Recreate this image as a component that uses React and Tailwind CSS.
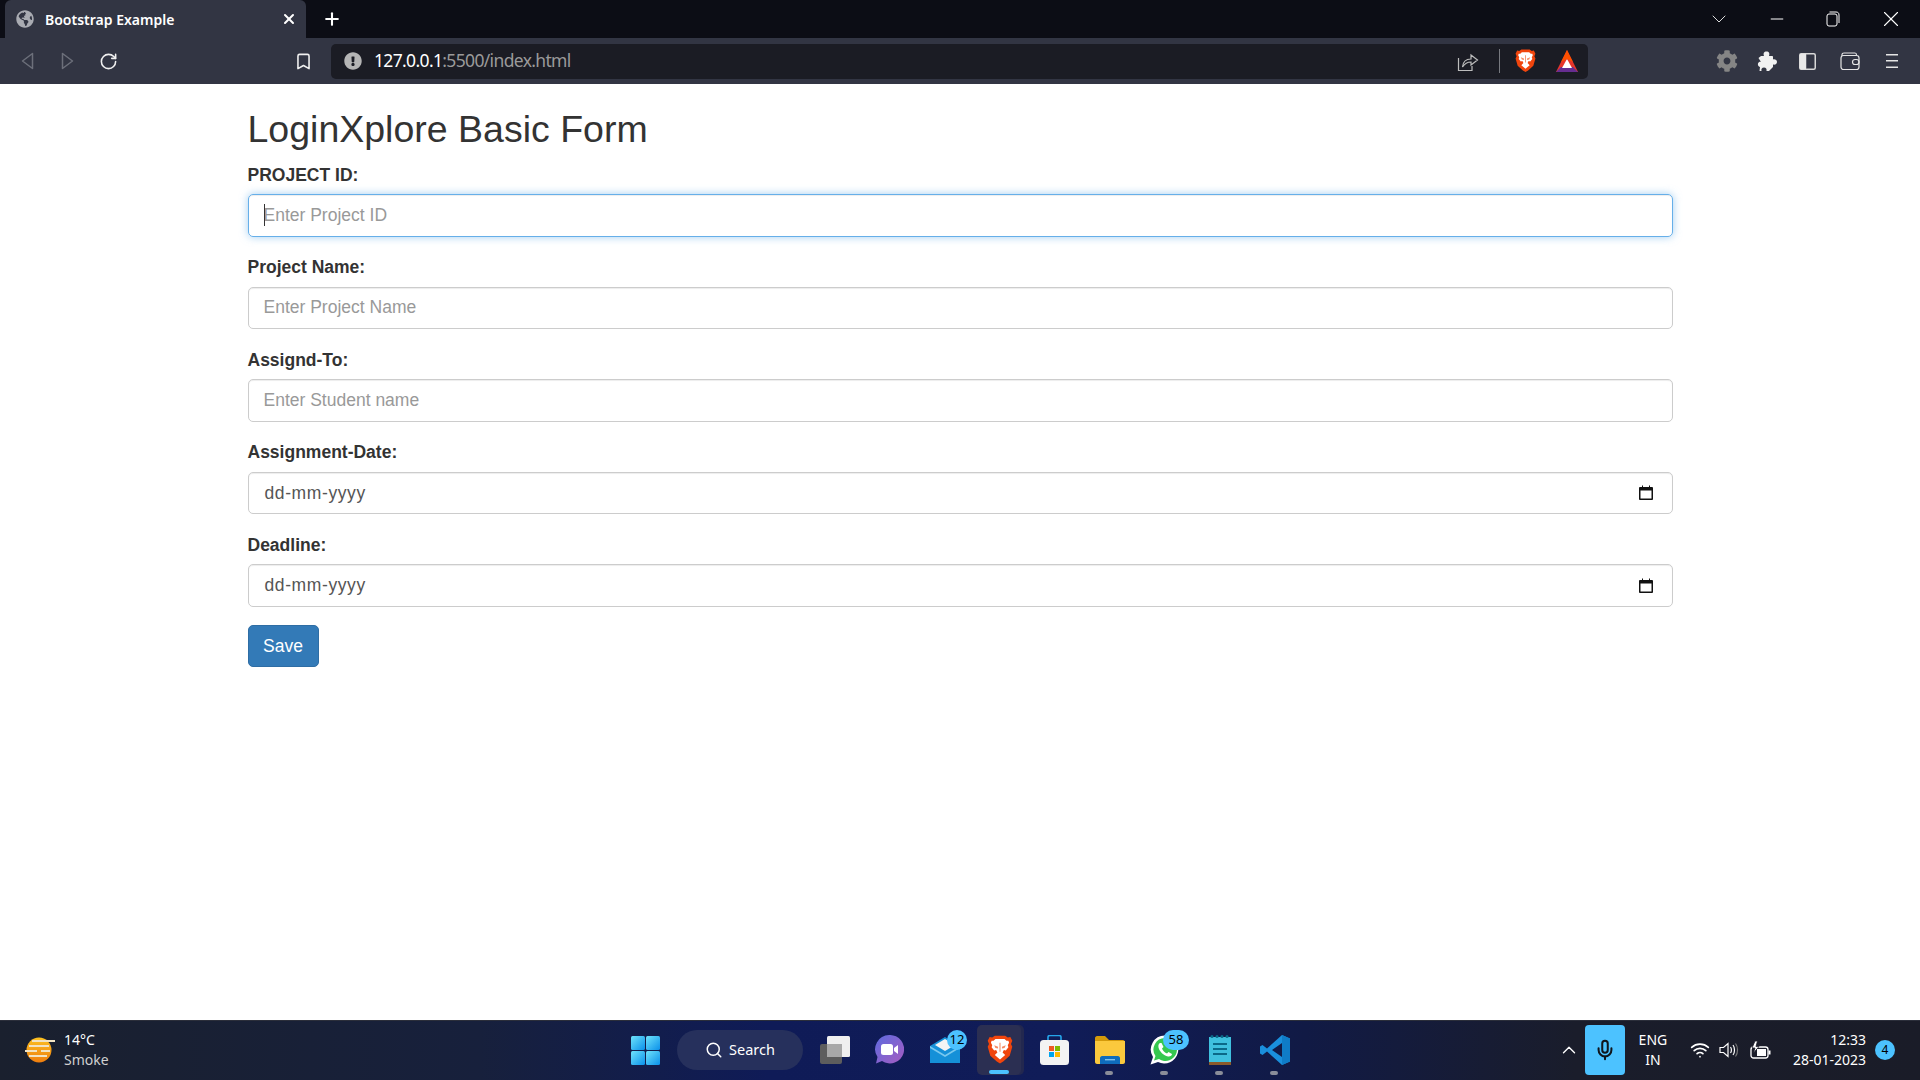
import React from 'react';
import { Plus, X, ChevronDown, ChevronUp, Minus, RotateCw, Bookmark, Search, Mic, Wifi } from 'lucide-react';
import { FaGlobeAmericas, FaExclamationCircle, FaCog } from 'react-icons/fa';

const UI_FONT = "font-['Noto_Sans',sans-serif]";

function BraveLogo({ size = 26 }) {
    return (
        <svg width={size} height={size * 1.12} viewBox="0 0 40 45">
            <path d="M12 1 H28 L32 4 L36 3 L39 9 L37 14 L39 18 L35 32 L25 41 L20 44 L15 41 L5 32 L1 18 L3 14 L1 9 L4 3 L8 4 Z" fill="#f0450d" />
            <path d="M13 6 H27 L30 9 L33 9 L34 12 L32 16 L33 19 L29 24 L26 23 L24 27 L28 31 L20 38 L12 31 L16 27 L14 23 L11 24 L7 19 L8 16 L6 12 L7 9 L10 9 Z" fill="#fff" />
            <path d="M11 16 L17 18 L17 21 L13 20 Z M29 16 L23 18 L23 21 L27 20 Z M19.2 12 H20.8 V26 H19.2 Z" fill="#f58a62" />
        </svg>
    );
}

function BatLogo() {
    return (
        <svg width="24" height="24" viewBox="0 0 24 24">
            <path d="M12 1 L23 23 H1 Z" fill="#e5352b" />
            <path d="M1 23 L6 18 H18 L23 23 Z" fill="#662d91" />
            <path d="M12 10 L17 19 H7 Z" fill="#fff" />
            <path d="M12 1 L18 13 L12 10 L6 13 Z" fill="#ff5000" />
        </svg>
    );
}

function ShareIcon() {
    return (
        <svg width="22" height="22" viewBox="0 0 22 22" fill="none" stroke="#bdbdbd" strokeWidth="1.2">
            <path d="M1.5 8 V20.5 H15 V16" />
            <path d="M5.5 17 C6 11 10 9 14 9 V5 L20.5 10 L14 15 V12 C10 12 8 13 5.5 17 Z" />
        </svg>
    );
}

function PuzzleIcon() {
    return (
        <svg width="20" height="20" viewBox="0 0 20 20" fill="#f2f2f2">
            <path d="M7 5 C6 2.5 7 0.5 9.5 0.5 C12 0.5 13 2.5 12 5 H15 C15.6 5 16 5.4 16 6 V8.5 C18 8 20 9 20 11 C20 13 18 14 16 13.5 V16 L14 18 L12 20 H9.5 C10 18 9 16.5 7 16.5 C5 16.5 4 18 4.5 20 H2.5 L3 16 C1.5 15.5 0.5 14 1 12.5 C1.5 11 3 10.5 4 11 L1.5 7 L4 5 Z" />
        </svg>
    );
}

function SidebarIcon() {
    return (
        <svg width="17" height="17" viewBox="0 0 17 17">
            <rect x="0.75" y="0.75" width="15.5" height="15.5" rx="1.5" fill="none" stroke="#d8d8d8" strokeWidth="1.5" />
            <rect x="0.75" y="0.75" width="6.5" height="15.5" rx="1" fill="#e8e8e8" />
        </svg>
    );
}

function WalletIcon() {
    return (
        <svg width="20" height="20" viewBox="0 0 20 20" fill="none" stroke="#e5e5e5" strokeWidth="1.2">
            <path d="M2 5 V3.5 C2 2.5 3 2 4 2 H15 C16 2 16.5 2.5 16.5 4" />
            <rect x="1" y="4.5" width="18" height="14" rx="2.5" />
            <rect x="12.5" y="8.5" width="6.5" height="5" rx="2.5" />
        </svg>
    );
}

function MenuIcon() {
    return (
        <svg width="14" height="18" viewBox="0 0 14 18" fill="#e5e5e5">
            <rect x="1" y="2" width="12" height="1.5" />
            <rect x="1" y="8" width="12" height="1.5" />
            <rect x="1" y="14.5" width="12" height="1.5" />
        </svg>
    );
}

function RestoreIcon() {
    return (
        <svg width="14" height="16" viewBox="0 0 14 16" fill="none" stroke="#fff" strokeWidth="1">
            <rect x="1" y="3" width="10" height="12" rx="2" />
            <path d="M3.5 1 H10 C12 1 13 2 13 4 V12" />
        </svg>
    );
}

function CalendarIcon() {
    return (
        <svg width="14" height="15" viewBox="0 0 14 15">
            <path d="M1 2 H3 V0.5 H4 V2 H10 V0.5 H11 V2 H13 C13.5 2 14 2.5 14 3 V14 C14 14.5 13.5 15 13 15 H1 C0.5 15 0 14.5 0 14 V3 C0 2.5 0.5 2 1 2 Z" fill="#111" />
            <rect x="1.5" y="5.5" width="11" height="8" fill="#fff" />
        </svg>
    );
}

function WeatherIcon() {
    return (
        <svg width="32" height="28" viewBox="0 0 32 28">
            <defs>
                <linearGradient id="sun" x1="0" y1="0" x2="0" y2="1">
                    <stop offset="0" stopColor="#fdc221" />
                    <stop offset="1" stopColor="#ee7d0e" />
                </linearGradient>
            </defs>
            <circle cx="15" cy="14" r="12.5" fill="url(#sun)" />
            <g fill="#f2e3c3">
                <rect x="8" y="4" width="23" height="2" />
                <rect x="5" y="9" width="20" height="2" />
                <rect x="1" y="14" width="12" height="2" />
                <rect x="17" y="14" width="9" height="2" />
                <rect x="5" y="19" width="18" height="2" />
            </g>
        </svg>
    );
}

function WindowsLogo() {
    return (
        <svg width="29" height="29" viewBox="0 0 29 29">
            <defs>
                <linearGradient id="win" x1="0" y1="0" x2="1" y2="1">
                    <stop offset="0" stopColor="#6fe3fb" />
                    <stop offset="1" stopColor="#0a90ea" />
                </linearGradient>
            </defs>
            <rect x="0" y="0" width="14" height="14" rx="1.5" fill="url(#win)" />
            <rect x="15" y="0" width="14" height="14" rx="1.5" fill="url(#win)" />
            <rect x="0" y="15" width="14" height="14" rx="1.5" fill="url(#win)" />
            <rect x="15" y="15" width="14" height="14" rx="1.5" fill="url(#win)" />
        </svg>
    );
}

function TaskViewIcon() {
    return (
        <svg width="30" height="28" viewBox="0 0 30 28">
            <rect x="0" y="8" width="22" height="20" rx="2" fill="#5d5d5d" />
            <rect x="7" y="0" width="23" height="21" rx="1.5" fill="#efefef" />
            <rect x="7" y="8" width="15" height="13" fill="#a8a8a8" />
        </svg>
    );
}

function TeamsIcon() {
    return (
        <svg width="29" height="30" viewBox="0 0 29 30">
            <defs>
                <linearGradient id="teams" x1="0" y1="0" x2="1" y2="1">
                    <stop offset="0" stopColor="#5d6be0" />
                    <stop offset="1" stopColor="#a65cc0" />
                </linearGradient>
            </defs>
            <path d="M14.5 0 A14.2 14.2 0 1 1 7 26 L1 28.5 L2.5 22 A14.2 14.2 0 0 1 14.5 0 Z" fill="url(#teams)" />
            <rect x="6" y="9" width="12" height="11" rx="2.5" fill="#fff" />
            <path d="M19 13 L23 10 V19 L19 16 Z" fill="#fff" />
        </svg>
    );
}

function MailIcon() {
    return (
        <svg width="30" height="26" viewBox="0 0 30 26">
            <path d="M15 0 L30 9 V26 H0 V9 Z" fill="#1590d8" />
            <path d="M5 8 L15 2 L25 8 L15 14 Z" fill="#f4f4f4" />
            <path d="M0 9 L15 18 L30 9 V11 L15 20 L0 11 Z" fill="#79c8ef" />
        </svg>
    );
}

function StoreIcon() {
    return (
        <svg width="29" height="30" viewBox="0 0 29 30">
            <path d="M8 6 V2 C8 1 9 0.5 10 0.5 H19 C20 0.5 21 1 21 2 V6" fill="none" stroke="#25a5ea" strokeWidth="1.6" />
            <rect x="0" y="5" width="29" height="25" rx="3.5" fill="#f3f3f3" />
            <rect x="9" y="11" width="5" height="5" fill="#ef5a24" />
            <rect x="15" y="11" width="5" height="5" fill="#7fba00" />
            <rect x="9" y="17" width="5" height="5" fill="#00a4ef" />
            <rect x="15" y="17" width="5" height="5" fill="#ffb900" />
        </svg>
    );
}

function FolderIcon() {
    return (
        <svg width="30" height="28" viewBox="0 0 30 28">
            <path d="M0 2 C0 1 1 0 2 0 H10 L14 4 H28 C29 4 30 5 30 6 V12 H0 Z" fill="#d49a0a" />
            <path d="M0 5 H30 V26 C30 27 29 28 28 28 H2 C1 28 0 27 0 26 Z" fill="#fbc93d" />
            <path d="M5 28 V22 C5 21 6 20 7 20 H23 C24 20 25 21 25 22 V28 Z" fill="#0f6cbd" />
            <rect x="10" y="23" width="10" height="1.4" fill="#7fc1ee" />
        </svg>
    );
}

function WhatsAppIcon() {
    return (
        <svg width="30" height="30" viewBox="0 0 30 30">
            <path d="M15 0.5 A14 14 0 1 1 8 27 L0.5 29.5 L3 22 A14 14 0 0 1 15 0.5 Z" fill="#fff" />
            <path d="M15 3 A11.5 11.5 0 1 1 9 24 L4 25.5 L5.5 21 A11.5 11.5 0 0 1 15 3 Z" fill="#35c84f" />
            <path d="M10 8 C9 8.5 8 10 8.5 12.5 C9.5 16.5 13.5 20.5 18 21.5 C20 22 22 20.5 22 19 L18.5 17 L17 18.5 C15 18 12.5 15.5 12 13.5 L13.5 12 L11.5 8 Z" fill="#fff" />
        </svg>
    );
}

function NotepadIcon() {
    return (
        <svg width="22" height="30" viewBox="0 0 22 30">
            <rect x="0" y="2" width="22" height="26" fill="#3fc1de" />
            <rect x="0" y="27" width="22" height="3" fill="#8b5a2b" />
            <g fill="#0b6a88">
                <circle cx="3" cy="1.5" r="1.5" />
                <circle cx="8" cy="1.5" r="1.5" />
                <circle cx="13" cy="1.5" r="1.5" />
                <circle cx="18" cy="1.5" r="1.5" />
                <rect x="4" y="8" width="14" height="2" />
                <rect x="4" y="13" width="14" height="2" />
                <rect x="4" y="18" width="14" height="2" />
            </g>
        </svg>
    );
}

function VsCodeIcon() {
    return (
        <svg width="30" height="30" viewBox="0 0 30 30">
            <path d="M22 0 L30 3.5 V26.5 L22 30 L7 16.5 L2.5 20 L0 18.5 V11.5 L2.5 10 L7 13.5 Z M22 8 L12 15 L22 22 Z" fill="#1a8fdc" fillRule="evenodd" />
            <path d="M22 0 L30 3.5 V26.5 L22 30 Z M22 8 V22 L22 22 Z" fill="#0f7cc7" />
        </svg>
    );
}

function VolumeIcon() {
    return (
        <svg width="20" height="16" viewBox="0 0 20 16" fill="none" stroke="#fff" strokeWidth="1.2">
            <path d="M1 5.5 H4.5 L9 1.5 V14.5 L4.5 10.5 H1 Z" />
            <path d="M11.5 5 C12.7 6.5 12.7 9.5 11.5 11" />
            <path d="M14 3 C16 5.5 16 10.5 14 13" />
            <path d="M16.5 1.5 C19.2 5 19.2 11 16.5 14.5" stroke="#777" />
        </svg>
    );
}

function BatteryIcon() {
    return (
        <svg width="21" height="18" viewBox="0 0 21 18">
            <rect x="1" y="6" width="17" height="11" rx="2.5" fill="none" stroke="#fff" strokeWidth="1.3" />
            <rect x="7" y="8" width="9" height="7" fill="#fff" />
            <rect x="18.5" y="9.5" width="2" height="4" fill="#fff" />
            <path d="M5 0 L2 7 H5 L3.5 12 L9 5.5 H6 L7.5 0 Z" fill="#fff" stroke="#1a1c28" strokeWidth="0.8" />
        </svg>
    );
}

function TaskbarSlot({ children, badge, badgeClass = '', active, running }) {
    return (
        <div className="relative flex h-[60px] w-[55px] shrink-0 items-center justify-center">
            {active && (
                <>
                    <div className="absolute left-[8px] top-[5px] h-[50px] w-[44px] rounded-[5px] bg-[#23284f]" />
                    <div className="absolute left-[5px] top-[5px] h-[50px] w-[44px] rounded-[5px] bg-[#2b2f52]" />
                </>
            )}
            <div className="relative flex items-center justify-center">{children}</div>
            {badge && (
                <div className={`absolute top-[10px] flex h-[20px] items-center justify-center rounded-full bg-[#4cc2ff] text-[13px] text-black ${badgeClass}`}>
                    {badge}
                </div>
            )}
            {active && <div className="absolute bottom-[6px] left-[17px] h-[4px] w-[20px] rounded-full bg-[#4cc2ff]" />}
            {running && <div className="absolute bottom-[5px] left-[23px] h-[4px] w-[8px] rounded-full bg-[#8a8d99]" />}
        </div>
    );
}

function Field({ label, placeholder, focused }) {
    return (
        <div className="mb-[18.75px]">
            <label className="mb-[6.25px] block text-[17.5px] font-bold leading-[25px]">{label}</label>
            <div className="relative">
                <input
                    type="text"
                    placeholder={placeholder}
                    className={`block h-[42.5px] w-full rounded-[5px] border px-[15px] text-[17.5px] outline-none placeholder:text-[#999] ${
                        focused
                            ? 'border-[#66afe9] shadow-[inset_0_1px_1px_rgba(0,0,0,0.075),0_0_8px_rgba(102,175,233,0.6)]'
                            : 'border-[#ccc] shadow-[inset_0_1px_1px_rgba(0,0,0,0.075)]'
                    }`}
                />
                {focused && <div className="absolute left-[16px] top-[10px] h-[22px] w-px bg-[#333]" />}
            </div>
        </div>
    );
}

function DateField({ label }) {
    return (
        <div className="mb-[18.75px]">
            <label className="mb-[6.25px] block text-[17.5px] font-bold leading-[25px]">{label}</label>
            <div className="flex h-[42.5px] items-center justify-between rounded-[5px] border border-[#ccc] pl-[16px] pr-[19px] text-[17.5px] tracking-[0.6px] text-[#555] shadow-[inset_0_1px_1px_rgba(0,0,0,0.075)]">
                <span>dd-mm-yyyy</span>
                <CalendarIcon />
            </div>
        </div>
    );
}

export default function App() {
    return (
        <div className="flex h-[1080px] w-[1920px] flex-col overflow-hidden bg-white">
            {/* tab strip */}
            <div className={`flex h-[38px] shrink-0 items-stretch bg-[#0c0d15] text-white ${UI_FONT}`}>
                <div className="ml-[5px] flex w-[301px] items-center rounded-t-[6px] bg-[#323543] pl-[11px] pr-[7px]">
                    <FaGlobeAmericas size={18} color="#a9abb2" />
                    <span className="ml-[11px] flex-1 text-[14px] font-semibold">Bootstrap Example</span>
                    <X size={16} strokeWidth={3} className="-translate-x-[2px]" />
                </div>
                <div className="ml-[16px] flex items-center">
                    <Plus size={20} strokeWidth={2.5} />
                </div>
                <div className="flex flex-1 items-center justify-end pr-[15px]">
                    <div className="flex w-[28px] justify-center"><ChevronDown size={24} strokeWidth={1} color="#ddd" /></div>
                    <div className="ml-[30px] flex w-[28px] justify-center"><Minus size={20} strokeWidth={1.2} /></div>
                    <div className="ml-[28px] flex w-[28px] justify-center"><RestoreIcon /></div>
                    <div className="ml-[30px] flex w-[28px] justify-center"><X size={26} strokeWidth={1} /></div>
                </div>
            </div>

            {/* toolbar */}
            <div className={`flex h-[46px] shrink-0 items-center bg-[#323543] ${UI_FONT}`}>
                <div className="ml-[20px] flex w-[14px] justify-center">
                    <svg width="13" height="18" viewBox="0 0 13 18" fill="none" stroke="#6c6f7a" strokeWidth="1.5"><path d="M11.5 1.5 V16.5 L1.5 9 Z" strokeLinejoin="round" /></svg>
                </div>
                <div className="ml-[26px] flex w-[14px] justify-center">
                    <svg width="13" height="18" viewBox="0 0 13 18" fill="none" stroke="#6c6f7a" strokeWidth="1.5"><path d="M1.5 1.5 V16.5 L11.5 9 Z" strokeLinejoin="round" /></svg>
                </div>
                <div className="ml-[24px] flex w-[20px] justify-center">
                    <RotateCw size={19} color="#f0f0f0" strokeWidth={2} />
                </div>
                <div className="ml-[175px] flex w-[20px] justify-center">
                    <Bookmark size={19} color="#f0f0f0" strokeWidth={2} />
                </div>
                <div className="ml-[18px] flex h-[35px] w-[1257px] items-center rounded-[5px] bg-[#1b1c24] pl-[13px] pr-[9px]">
                    <FaExclamationCircle size={18} color="#b5b5b5" />
                    <span className="ml-[12px] flex-1 -translate-y-[1px] text-[17.5px] tracking-[-0.65px] text-[#9a9a9a]"><span className="text-white">127.0.0.1</span>:5500/index.html</span>
                    <ShareIcon />
                    <div className="ml-[20px] h-[24px] w-px bg-[#77797f]" />
                    <div className="ml-[14px] flex w-[22px] justify-center"><BraveLogo size={21} /></div>
                    <div className="ml-[19px]"><BatLogo /></div>
                </div>
                <div className="ml-[128px] flex w-[22px] justify-center"><FaCog size={22} color="#858585" /></div>
                <div className="ml-[18px] flex w-[22px] justify-center"><PuzzleIcon /></div>
                <div className="ml-[18px] flex w-[22px] justify-center"><SidebarIcon /></div>
                <div className="ml-[21px] flex w-[22px] justify-center"><WalletIcon /></div>
                <div className="ml-[20px] flex w-[22px] justify-center"><MenuIcon /></div>
            </div>

            {/* page */}
            <main className="min-h-0 flex-1 font-['Liberation_Sans',sans-serif] text-[#333]">
                <div className="ml-[247.5px] w-[1425px]">
                    <h2 className="mb-[12.5px] mt-[25px] text-[37.5px] font-normal leading-[41.25px]">LoginXplore Basic Form</h2>
                    <Field label="PROJECT ID:" placeholder="Enter Project ID" focused />
                    <Field label="Project Name:" placeholder="Enter Project Name" />
                    <Field label="Assignd-To:" placeholder="Enter Student name" />
                    <DateField label="Assignment-Date:" />
                    <DateField label="Deadline:" />
                    <button className="h-[42px] w-[71px] rounded-[5px] border border-[#2e6da4] bg-[#337ab7] text-[17.5px] text-white">Save</button>
                </div>
            </main>

            {/* taskbar */}
            <div className={`grid h-[60px] shrink-0 grid-cols-[1fr_auto_1fr] bg-[linear-gradient(90deg,#1a202e_0%,#17203c_25%,#0f1b57_40%,#101c58_55%,#111a45_68%,#1a1d2b_82%,#1a1c28_100%)] text-white shadow-[inset_0_1px_0_#2b2e3a] ${UI_FONT}`}>
                <div className="flex items-center pl-[24px]">
                    <WeatherIcon />
                    <div className="ml-[8px] text-[14px] leading-[20px]">
                        <div>14°C</div>
                        <div className="text-[#d0d0d0]">Smoke</div>
                    </div>
                </div>
                <div className="flex items-center">
                    <TaskbarSlot><WindowsLogo /></TaskbarSlot>
                    <div className="flex w-[134px] justify-center">
                        <div className="flex h-[40px] w-[126px] items-center justify-center rounded-full bg-[#26305c] text-[14.5px]">
                            <Search size={18} strokeWidth={2} />
                            <span className="ml-[6px]">Search</span>
                        </div>
                    </div>
                    <TaskbarSlot><TaskViewIcon /></TaskbarSlot>
                    <TaskbarSlot><TeamsIcon /></TaskbarSlot>
                    <TaskbarSlot badge="12" badgeClass="left-[30px] w-[20px] top-[7px]"><MailIcon /></TaskbarSlot>
                    <TaskbarSlot active><BraveLogo size={26} /></TaskbarSlot>
                    <TaskbarSlot><StoreIcon /></TaskbarSlot>
                    <TaskbarSlot running><FolderIcon /></TaskbarSlot>
                    <TaskbarSlot running badge="58" badgeClass="left-[26px] w-[26px] top-[8px]"><WhatsAppIcon /></TaskbarSlot>
                    <TaskbarSlot running><NotepadIcon /></TaskbarSlot>
                    <TaskbarSlot running><VsCodeIcon /></TaskbarSlot>
                </div>
                <div className="flex items-center justify-end pr-[25px]">
                    <ChevronUp size={22} strokeWidth={1.5} />
                    <div className="ml-[5px] flex h-[50px] w-[40px] items-center justify-center rounded-[4px] bg-[#4cc2ff]">
                        <Mic size={22} color="#10151c" strokeWidth={2.2} />
                    </div>
                    <div className="ml-[12px] w-[32px] text-center text-[14px] leading-[20px]">
                        <div>ENG</div>
                        <div>IN</div>
                    </div>
                    <div className="ml-[20px] flex w-[22px] justify-center"><Wifi size={20} strokeWidth={2} /></div>
                    <div className="ml-[7px] flex w-[22px] justify-center"><VolumeIcon /></div>
                    <div className="ml-[10px] flex w-[22px] justify-center"><BatteryIcon /></div>
                    <div className="ml-[21px] text-right text-[14px] leading-[20px]">
                        <div>12:33</div>
                        <div>28-01-2023</div>
                    </div>
                    <div className="ml-[9px] flex h-[20px] w-[20px] items-center justify-center rounded-full bg-[#4cc2ff] text-[12px] text-black">4</div>
                </div>
            </div>
        </div>
    );
}
